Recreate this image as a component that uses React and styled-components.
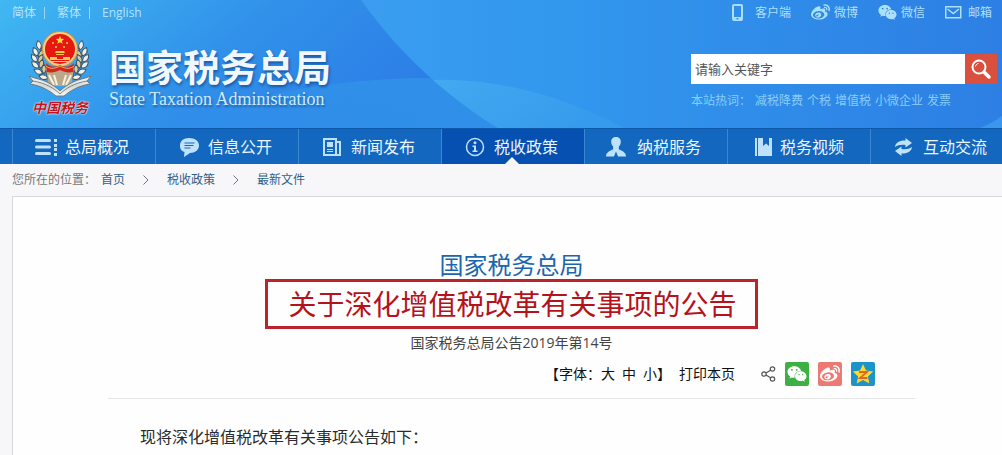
import React from "react";
import styled, { createGlobalStyle } from "styled-components";
import { FaWeibo, FaWeixin } from "react-icons/fa";

const GlobalStyle = createGlobalStyle`
  * { box-sizing: border-box; }
  html, body { margin: 0; padding: 0; }
  body {
    min-height: 100vh;
    background: #f7f7fa;
    color: #333;
    font-family: "Open Sans", "Noto Sans CJK SC", sans-serif;
    font-size: 12px;
    line-height: 16px;
  }
  a { color: inherit; text-decoration: none; }
  button, input { font: inherit; color: inherit; border: 0; border-radius: 0; margin: 0; padding: 0; background: none; }
  button { cursor: pointer; }
  ul, ol { list-style: none; margin: 0; padding: 0; }
  h1, h2, p { margin: 0; font-weight: 400; }
  svg { display: block; flex: none; }
`;

const Page = styled.div`
  min-height: 100vh;
  display: flex;
  flex-direction: column;
  overflow-x: hidden;
`;

const Header = styled.header`
  position: relative;
  display: flex;
  justify-content: space-between;
  min-height: 128px;
  padding: 0 5px 0 12px;
  background: #2f8be9;
`;

const Backdrop = styled.svg`
  position: absolute;
  inset: 0;
  width: 100%;
  height: 100%;
`;

const HeaderColumn = styled.div`
  position: relative;
  display: flex;
  flex-direction: column;
  width: ${(p) => p.$width || "auto"};
`;

const Languages = styled.ul`
  display: flex;
  align-items: center;
  height: 26px;
  color: #b4e4fb;
`;

const Language = styled.li`
  display: flex;
  align-items: center;
  & + &::before {
    content: "";
    width: 1px;
    height: 12px;
    margin: 0 12px 0 8px;
    background: #9bd6f7;
  }
`;

const Brand = styled.a`
  display: flex;
  gap: 17px;
  padding: 4px 0 0 16px;
`;

const Emblem = styled.span`
  display: flex;
  flex-direction: column;
  align-items: center;
  width: 64px;
`;

const EmblemCaption = styled.span`
  color: #c4141c;
  font-family: "Noto Sans CJK SC", sans-serif;
  font-size: 14px;
  font-style: italic;
  font-weight: 700;
  line-height: 18px;
  text-shadow: 0 0 1px #fff, 0 0 2px #fff;
  white-space: nowrap;
`;

const BrandNames = styled.span`
  display: flex;
  flex-direction: column;
  padding-top: 16px;
`;

const BrandTitle = styled.span`
  color: #f1f7fe;
  font-family: "Noto Sans CJK SC", sans-serif;
  font-size: 37px;
  font-weight: 700;
  line-height: 40px;
  text-shadow: 1px 2px 3px rgba(10, 50, 110, 0.6);
  white-space: nowrap;
`;

const BrandSubtitle = styled.span`
  padding-top: 3px;
  color: #c9ecff;
  font-family: "Liberation Serif", serif;
  font-size: 18px;
  line-height: 20px;
  text-shadow: 1px 2px 2px rgba(10, 50, 110, 0.5);
  white-space: nowrap;
`;

const Channels = styled.ul`
  display: flex;
  justify-content: flex-end;
  gap: 20px;
  height: 25px;
  padding-right: 5px;
  color: #abe0fb;
`;

const Channel = styled.a`
  display: flex;
  align-items: center;
  gap: 4px;
  height: 25px;
  white-space: nowrap;
`;

const Search = styled.form`
  display: flex;
  height: 30px;
  margin-top: 29px;
`;

const SearchInput = styled.input`
  flex: 1;
  min-width: 0;
  padding: 0 4px;
  background: #fff;
  font-size: 13px;
  &::placeholder { color: #555; opacity: 1; }
`;

const SearchButton = styled.button`
  display: flex;
  align-items: center;
  justify-content: center;
  width: 32px;
  background: #d9503f;
`;

const HotWords = styled.div`
  display: flex;
  gap: 4px;
  margin-top: 9px;
  color: #86cdf8;
  white-space: nowrap;
`;

const Nav = styled.nav`
  padding-left: 12px;
  border-top: 1px solid #0c58ab;
  background: #1367be;
`;

const NavList = styled.ul`
  display: grid;
  grid-template-columns: repeat(6, 143px) 1fr;
`;

const NavLink = styled.a`
  position: relative;
  display: flex;
  align-items: center;
  gap: 8px;
  height: 35px;
  padding-left: 20px;
  border-left: 1px solid #3a87d2;
  background: ${(p) => (p.$active ? "#0650b2" : "transparent")};
  color: #eaf6ff;
  font-size: 16px;
  line-height: 24px;
  white-space: nowrap;
  svg { color: #bfe2fc; }
  &::after {
    content: ${(p) => (p.$active ? '""' : "none")};
    position: absolute;
    left: 50%;
    bottom: 0;
    margin-left: -8px;
    border: 7px solid transparent;
    border-top-width: 0;
    border-bottom-color: #f7f7fa;
  }
`;

const Breadcrumb = styled.nav`
  display: flex;
  align-items: center;
  gap: 5px;
  height: 32px;
  padding-left: 12px;
  color: #777;
`;

const Trail = styled.ol`
  display: flex;
  color: #2f608c;
`;

const TrailItem = styled.li`
  display: flex;
  align-items: center;
  svg { margin: 0 18px; color: #6b7783; }
`;

const Article = styled.article`
  flex: 1;
  margin-left: 12px;
  padding: 54px 87px 6px 95px;
  border: solid #d6d8dc;
  border-width: 1px 0 0 1px;
  background: #fefefe;
`;

const ArticleHeader = styled.header`
  display: flex;
  flex-direction: column;
  align-items: center;
  border-bottom: 1px solid #e6e6e6;
`;

const Agency = styled.h2`
  color: #1b66ad;
  font-size: 24px;
  line-height: 28px;
`;

const Title = styled.h1`
  padding: 0 18px 0 20px;
  border: 3px solid #bd232b;
  color: #b5121b;
  font-size: 28px;
  line-height: 44px;
`;

const DocNumber = styled.p`
  color: #444;
  font-size: 14px;
  line-height: 28px;
`;

const Tools = styled.div`
  display: flex;
  align-items: center;
  align-self: flex-end;
  gap: 26px;
  padding: 5px 40px 12px 0;
  color: #111;
  font-size: 14px;
  line-height: 24px;
`;

const ToolGroup = styled.div`
  display: flex;
  align-items: center;
  gap: ${(p) => p.$gap}px;
  white-space: nowrap;
`;

const Share = styled.button`
  display: flex;
  align-items: center;
  justify-content: center;
  width: 24px;
  height: 24px;
  border-radius: 2px;
  background: ${(p) => p.$color};
  color: #fff;
`;

const Paragraph = styled.p`
  margin: 26px 0 0 32px;
  color: #2b2b2b;
  font-size: 16px;
  line-height: 24px;
`;

const HeaderBackdrop = () => (
  <Backdrop viewBox="0 0 1002 128" preserveAspectRatio="none" aria-hidden="true">
    <defs>
      <linearGradient id="sky" x1="0" y1="0" x2="1" y2="0.3">
        <stop offset="0" stopColor="#40b8f2" />
        <stop offset="0.5" stopColor="#3192ea" />
        <stop offset="1" stopColor="#2c7ce6" />
      </linearGradient>
      <linearGradient id="wide" x1="0" y1="0" x2="1" y2="0">
        <stop offset="0" stopColor="#3a9df0" />
        <stop offset="0.3" stopColor="#3298ee" />
        <stop offset="0.6" stopColor="#308de9" />
        <stop offset="1" stopColor="#2d7fe4" />
      </linearGradient>
      <linearGradient id="wave" x1="0" y1="0" x2="1" y2="0">
        <stop offset="0" stopColor="#34a2ee" stopOpacity="0" />
        <stop offset="0.5" stopColor="#329aea" stopOpacity="0.5" />
        <stop offset="1" stopColor="#3090e9" />
      </linearGradient>
      <linearGradient id="fold" x1="0" y1="0" x2="1" y2="0.4">
        <stop offset="0" stopColor="#43a9f0" />
        <stop offset="1" stopColor="#379bed" />
      </linearGradient>
    </defs>
    <rect width="500" height="128" fill="url(#sky)" />
    <path d="M170 128C230 98 330 78 430 78L500 128Z" fill="url(#wave)" />
    <path d="M361 0C384 32 407 57 433 80C454 98 475 114 498 128H1002V0Z" fill="url(#wide)" />
    <path d="M433 80C500 78 565 97 624 128H498C475 114 454 98 433 80Z" fill="url(#fold)" />
    <path d="M980 128C988 125 995 121 1002 116V128Z" fill="#3b97ec" />
  </Backdrop>
);

const leaves = [
  [13, 17, -20], [10, 23, -5], [9, 29, 5], [10, 35, 18], [13, 41, 32], [18, 46, 45],
];

const Wreath = () => (
  <g fill="#eef0ec" stroke="#3f5261" strokeWidth="1">
    {leaves.map(([x, y, turn]) => (
      <g key={y} transform={`translate(${x} ${y}) rotate(${-turn})`}>
        <path d="M0 3C-5 2-6-1-5-5C-1-4 1-1 0 3Z" />
        <path d="M1 4C0 0 2-3 6-4C7 0 5 3 1 4Z" fill="#d9c9a0" />
      </g>
    ))}
  </g>
);

const EmblemDrawing = () => (
  <svg width="64" height="68" viewBox="0 0 64 68" aria-hidden="true">
    <defs>
      <linearGradient id="silver" x1="0" y1="0" x2="0" y2="1">
        <stop offset="0" stopColor="#ffffff" />
        <stop offset="0.5" stopColor="#d4d8d6" />
        <stop offset="1" stopColor="#f7f8f6" />
      </linearGradient>
    </defs>
    <Wreath />
    <g transform="translate(64 0) scale(-1 1)"><Wreath /></g>
    <path d="M18 38H46L43 56H21Z" fill="#b9a98a" />
    <path d="M21 45L26 55M26 45L29 55M38 45L35 55M43 45L38 55" stroke="#f7f1e0" strokeWidth="2" />
    <circle cx="32" cy="19" r="18" fill="#c9974a" />
    <circle cx="32" cy="19" r="17" fill="#f1cf86" />
    <circle cx="32" cy="19" r="15" fill="#e5190f" />
    <path d="M32 6l1.200 2.700 2.900.3-2.200 1.900.7 2.900-2.600-1.500-2.600 1.500.7-2.900-2.200-1.900 2.900-.3z" fill="#ffd84a" />
    <g fill="#ffc94a">
      <circle cx="25" cy="13" r="1" /><circle cx="39" cy="13" r="1" />
      <circle cx="28" cy="17" r="1" /><circle cx="36" cy="17" r="1" />
      <path d="M28 21h8l1 2H27zM28 24h8v1h-8zM22 27h7v2h6v-2h7v3H22zM20 31h24l-2 1H22z" />
    </g>
    <path d="M18 33C23 38 28 37 32 35C36 37 41 38 46 33L45 42C40 43 36 42 32 40C28 42 24 43 19 42Z" fill="#d6241a" />
    <path d="M18 36C23 40 28 38 32 36C36 38 41 40 46 36" fill="none" stroke="#f0b55e" strokeWidth="1" />
    <path d="M1 46C8 49 13 49 19 52C25 55 29 58 32 61C35 58 39 55 45 52C51 49 56 49 63 46L59 51L62 54C50 56 42 61 36 66H28C22 61 14 56 2 54L5 51Z" fill="url(#silver)" stroke="#6d797f" strokeWidth="1" />
    <path d="M5 51C17 53 26 58 32 64C38 58 47 53 59 51" fill="none" stroke="#7d8886" strokeWidth="1" />
  </svg>
);

const PhoneIcon = () => (
  <svg width="19" height="19" viewBox="0 0 19 19" aria-hidden="true">
    <path fill="currentColor" fillRule="evenodd" d="M2 1h7a2 2 0 0 1 2 2v13a2 2 0 0 1-2 2H2a2 2 0 0 1-2-2V3a2 2 0 0 1 2-2zM2 3v11h7V3zM4.500 15v1.500h2V15z" />
  </svg>
);

const MailIcon = () => (
  <svg width="19" height="19" viewBox="0 0 19 19" fill="none" stroke="currentColor" strokeWidth="1.500" aria-hidden="true">
    <rect x="0.750" y="3.750" width="15" height="11" />
    <path d="M2.500 6L8.250 10.500L14 6" />
  </svg>
);

const SearchIcon = () => (
  <svg width="24" height="24" viewBox="0 0 24 24" fill="none" stroke="#fff" aria-hidden="true">
    <circle cx="10" cy="10" r="6.500" strokeWidth="2" />
    <path d="M15 15L20 20" strokeWidth="3.500" strokeLinecap="round" />
    <path d="M6.500 9.500C7 7.500 8 6.800 9.500 6.500" strokeWidth="1" />
  </svg>
);

const NavIcon = ({ children }) => (
  <svg width="24" height="24" viewBox="0 0 24 24" fill="currentColor" aria-hidden="true">{children}</svg>
);

const icons = {
  list: (
    <NavIcon>
      <path d="M3.500 5.500h13M3.500 12h13M3.500 18.500h13" stroke="currentColor" strokeWidth="3" strokeLinecap="round" />
      <path d="M21 4h3v3h-3zM21 9h3v3h-3zM21 13h3v3h-3zM21 18h3v3h-3z" />
    </NavIcon>
  ),
  chat: (
    <NavIcon>
      <path d="M13 3c6 0 10 3 10 7.500S19 18 14 18l-6 4 .500-5C5 16 4 13.500 4 10.500 4 6 7.500 3 13 3z" />
      <path d="M8.500 8h10M8.500 10.500h9M8.500 13h6" stroke="#1367be" strokeWidth="1.200" />
    </NavIcon>
  ),
  news: (
    <NavIcon>
      <path d="M5 4h12v16H5zM17 7h4v13h-6" fill="none" stroke="currentColor" strokeWidth="2" />
      <path d="M8 7h6v5H8zM8 14h6v1H8zM8 16h6v1H8z" />
    </NavIcon>
  ),
  info: (
    <NavIcon>
      <circle cx="13" cy="12" r="8.500" fill="none" stroke="currentColor" strokeWidth="1.500" />
      <circle cx="13" cy="7.800" r="1.500" />
      <path d="M10.500 10.500h3.500v5h1.500V17h-5v-1.500H12V12h-1.500z" />
    </NavIcon>
  ),
  person: (
    <NavIcon>
      <path d="M11 2c3 0 5 2 4.800 5-.1 2-1 3.500-2 4.500v2.500c2 1.800 7.200 2.500 7.200 7.500h-8l-2-5-2 5H1c0-5 5.200-5.700 7.200-7.500v-2.500c-1-1-1.900-2.500-2-4.500C6 4 8 2 11 2z" />
    </NavIcon>
  ),
  book: (
    <NavIcon>
      <path d="M7 3h2v18H7zM10 3h5v8l3-2.500 3 2.500V3h3v18H10z" />
    </NavIcon>
  ),
  exchange: (
    <NavIcon>
      <path d="M14.500 3L21 8L14.500 12.500V10C10 9.500 7 10 4 12C4.500 8 8 5.300 14.500 5.500Z" />
      <path d="M10.500 21L4 16L10.500 11.500V14C15 14.500 18 14 21 12C20.500 16 17 18.700 10.500 18.500Z" />
    </NavIcon>
  ),
};

const Chevron = () => (
  <svg width="6" height="10" viewBox="0 0 6 10" fill="none" stroke="currentColor" aria-hidden="true">
    <path d="M0.500 0.500L5 5L0.500 9.500" />
  </svg>
);

const ShareIcon = () => (
  <svg width="15" height="16" viewBox="0 0 15 16" fill="none" stroke="#555" strokeWidth="1.200" aria-hidden="true">
    <circle cx="3" cy="8" r="2.200" /><circle cx="11.500" cy="3" r="2.200" /><circle cx="11.500" cy="13" r="2.200" />
    <path d="M5 7L9.500 4.200M5 9L9.500 11.800" />
  </svg>
);

const QzoneIcon = () => (
  <svg width="22" height="22" viewBox="0 0 22 22" aria-hidden="true">
    <path d="M11 1l3 6.500 7.200.9-5.300 5 1.400 7.100L11 17l-6.300 3.500 1.400-7.100-5.300-5L8 7.500z" fill="#ffd930" />
    <path d="M7 9h8l-7 6h7.500" fill="none" stroke="#e8651e" strokeWidth="1.800" />
  </svg>
);

const channels = [
  ["客户端", <PhoneIcon />],
  ["微博", <FaWeibo size={19} />],
  ["微信", <FaWeixin size={19} />],
  ["邮箱", <MailIcon />],
];

const sections = [
  ["总局概况", "list"],
  ["信息公开", "chat"],
  ["新闻发布", "news"],
  ["税收政策", "info"],
  ["纳税服务", "person"],
  ["税务视频", "book"],
  ["互动交流", "exchange"],
];

const hotWords = ["减税降费", "个税", "增值税", "小微企业", "发票"];
const trail = ["首页", "税收政策", "最新文件"];

export default function App() {
  return (
    <Page>
      <GlobalStyle />
      <Header>
        <HeaderBackdrop />
        <HeaderColumn>
          <Languages>
            {["简体", "繁体", "English"].map((name) => (
              <Language key={name}><a href="#lang">{name}</a></Language>
            ))}
          </Languages>
          <Brand href="#home">
            <Emblem>
              <EmblemDrawing />
              <EmblemCaption>中国税务</EmblemCaption>
            </Emblem>
            <BrandNames>
              <BrandTitle>国家税务总局</BrandTitle>
              <BrandSubtitle>State Taxation Administration</BrandSubtitle>
            </BrandNames>
          </Brand>
        </HeaderColumn>
        <HeaderColumn $width="306px">
          <Channels>
            {channels.map(([name, icon]) => (
              <li key={name}><Channel href="#channel">{icon}{name}</Channel></li>
            ))}
          </Channels>
          <Search role="search" onSubmit={(e) => e.preventDefault()}>
            <SearchInput type="text" aria-label="请输入关键字" placeholder="请输入关键字" />
            <SearchButton type="submit" aria-label="搜索"><SearchIcon /></SearchButton>
          </Search>
          <HotWords>
            <span>本站热词：</span>
            {hotWords.map((word) => <a key={word} href="#hot">{word}</a>)}
          </HotWords>
        </HeaderColumn>
      </Header>

      <Nav>
        <NavList>
          {sections.map(([name, icon]) => (
            <li key={name}>
              <NavLink href="#section" $active={icon === "info"}>{icons[icon]}{name}</NavLink>
            </li>
          ))}
        </NavList>
      </Nav>

      <Breadcrumb>
        <span>您所在的位置：</span>
        <Trail>
          {trail.map((name, i) => (
            <TrailItem key={name}>{i > 0 && <Chevron />}<a href="#trail">{name}</a></TrailItem>
          ))}
        </Trail>
      </Breadcrumb>

      <Article>
        <ArticleHeader>
          <Agency>国家税务总局</Agency>
          <Title>关于深化增值税改革有关事项的公告</Title>
          <DocNumber>国家税务总局公告2019年第14号</DocNumber>
          <Tools>
            <ToolGroup $gap={8}>
              <ToolGroup $gap={7}>
                <span>【字体：<button type="button">大</button></span>
                <button type="button">中</button>
                <span><button type="button">小</button>】</span>
              </ToolGroup>
              <button type="button">打印本页</button>
            </ToolGroup>
            <ToolGroup $gap={9}>
              <ShareIcon />
              <Share type="button" aria-label="微信" $color="#3db044"><FaWeixin size={20} /></Share>
              <Share type="button" aria-label="微博" $color="#ec7a72"><FaWeibo size={20} /></Share>
              <Share type="button" aria-label="QQ空间" $color="#1c93c9"><QzoneIcon /></Share>
            </ToolGroup>
          </Tools>
        </ArticleHeader>
        <Paragraph>现将深化增值税改革有关事项公告如下：</Paragraph>
      </Article>
    </Page>
  );
}
